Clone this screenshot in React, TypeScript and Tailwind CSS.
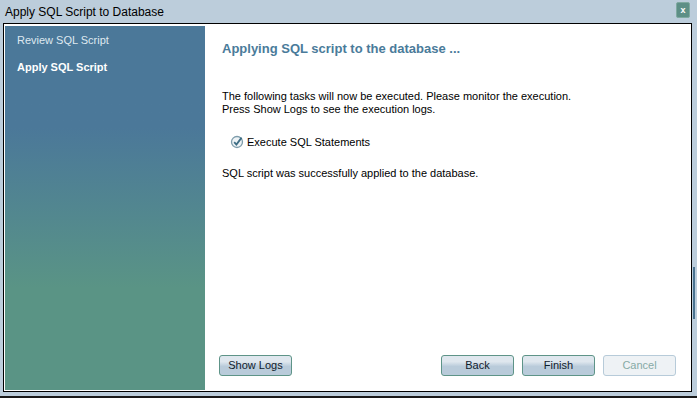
const font = { fontFamily: '"Liberation Sans", "DejaVu Sans", sans-serif' };

function WizButton({ label, disabled = false }: { label: string; disabled?: boolean }) {
  return (
    <button
      className={
        disabled
          ? "h-[21px] w-[73px] rounded-[3px] border border-[#b7cbd9] bg-[#eef2f5] text-[11px] text-[#86aaa6]"
          : "h-[21px] w-[73px] rounded-[3px] border border-[#5e9488] bg-linear-to-b from-[#dfe7ee] from-[30%] to-[#b9cbda] to-[55%] text-[11px] text-[#10202c]"
      }
    >
      {label}
    </button>
  );
}

export default function App() {
  return (
    <div style={font} className="flex h-[398px] w-[697px] flex-col overflow-hidden bg-[#bccddb]">
      {/* TITLE BAR */}
      <div className="flex h-[23px] shrink-0 items-center justify-between pl-[5px] pr-[7px]">
        <span className="text-[12px] leading-none text-black">Apply SQL Script to Database</span>
        <div className="mt-[-3px] grid h-[16px] w-[14px] place-items-center rounded-[2px] border border-[#7fa9a0] bg-[#5d8f86] text-[9px] font-bold leading-none text-white">
          x
        </div>
      </div>

      {/* BODY */}
      <div className="flex min-h-0 flex-1">
        <div className="ml-[3px] flex flex-1 border border-black bg-white pb-[1px] pl-[1px] pt-[2px]">
          {/* SIDEBAR */}
          <div className="flex w-[200px] shrink-0 flex-col bg-linear-to-b from-[#4b7899] from-[28%] to-[#5a9485] to-[72%] pl-[12px] pt-[6px]">
            <span className="text-[11px] text-[#dfe8f0]">Review SQL Script</span>
            <span className="mt-[10px] text-[11px] font-bold text-white">Apply SQL Script</span>
          </div>

          {/* CONTENT */}
          <div className="flex flex-1 flex-col pb-[14px] pl-[17px] pr-[15px] pt-[13px]">
            <h1 className="text-[13px] font-bold text-[#4a7b9a]">Applying SQL script to the database ...</h1>

            <p className="mt-[31px] text-[11px] leading-[13px] text-black">
              The following tasks will now be executed. Please monitor the execution.
              <br />
              Press Show Logs to see the execution logs.
            </p>

            <div className="ml-[8px] mt-[18px] flex items-center gap-[3px]">
              <svg width="14" height="14" viewBox="0 0 14 14">
                <circle cx="7" cy="7" r="5.5" fill="#eef3f6" stroke="#7d9cab" strokeWidth="1.3" />
                <path d="M4.2 7.2 L6.4 9.6 L11.6 2.6" fill="none" stroke="#3d6d84" strokeWidth="1.8" />
              </svg>
              <span className="text-[11px] text-black">Execute SQL Statements</span>
            </div>

            <p className="mt-[15px] text-[11px] text-black">SQL script was successfully applied to the database.</p>

            <div className="-ml-[3px] mt-auto flex items-center">
              <WizButton label="Show Logs" />
              <div className="ml-auto flex gap-[8px]">
                <WizButton label="Back" />
                <WizButton label="Finish" />
                <WizButton label="Cancel" disabled />
              </div>
            </div>
          </div>
        </div>

        {/* RIGHT EDGE */}
        <div className="flex w-[5px] shrink-0 flex-col pt-[244px]">
          <div className="ml-[1px] h-[52px] w-[2px] bg-[#4a7390]" />
        </div>
      </div>

      {/* BOTTOM EDGE */}
      <div className="h-[4px] shrink-0" />
      <div className="h-[2px] shrink-0 bg-[#1a1a1a]" />
    </div>
  );
}
